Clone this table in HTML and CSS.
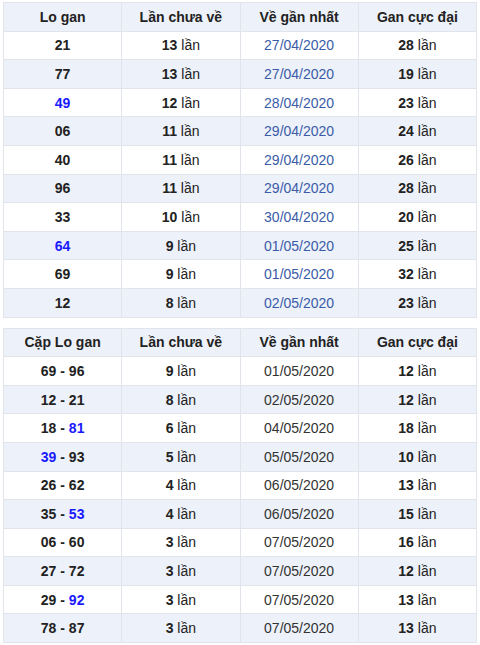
FILE: index.html
```html
<!DOCTYPE html>
<html>
<head>
<meta charset="utf-8">
<link rel="stylesheet" href="styles.css">
</head>
<body>
<table class="tbl">
  <thead>
    <tr><th>Lo gan</th><th>Lần chưa về</th><th>Về gần nhất</th><th>Gan cực đại</th></tr>
  </thead>
  <tbody>
    <tr><td class="num">21</td><td><b>13</b> lần</td><td class="date blue">27/04/2020</td><td><b>28</b> lần</td></tr>
    <tr><td class="num">77</td><td><b>13</b> lần</td><td class="date blue">27/04/2020</td><td><b>19</b> lần</td></tr>
    <tr><td class="num"><span class="hl">49</span></td><td><b>12</b> lần</td><td class="date blue">28/04/2020</td><td><b>23</b> lần</td></tr>
    <tr><td class="num">06</td><td><b>11</b> lần</td><td class="date blue">29/04/2020</td><td><b>24</b> lần</td></tr>
    <tr><td class="num">40</td><td><b>11</b> lần</td><td class="date blue">29/04/2020</td><td><b>26</b> lần</td></tr>
    <tr><td class="num">96</td><td><b>11</b> lần</td><td class="date blue">29/04/2020</td><td><b>28</b> lần</td></tr>
    <tr><td class="num">33</td><td><b>10</b> lần</td><td class="date blue">30/04/2020</td><td><b>20</b> lần</td></tr>
    <tr><td class="num"><span class="hl">64</span></td><td><b>9</b> lần</td><td class="date blue">01/05/2020</td><td><b>25</b> lần</td></tr>
    <tr><td class="num">69</td><td><b>9</b> lần</td><td class="date blue">01/05/2020</td><td><b>32</b> lần</td></tr>
    <tr><td class="num">12</td><td><b>8</b> lần</td><td class="date blue">02/05/2020</td><td><b>23</b> lần</td></tr>
  </tbody>
</table>
<table class="tbl second">
  <thead>
    <tr><th>Cặp Lo gan</th><th>Lần chưa về</th><th>Về gần nhất</th><th>Gan cực đại</th></tr>
  </thead>
  <tbody>
    <tr><td class="num">69 - 96</td><td><b>9</b> lần</td><td class="date">01/05/2020</td><td><b>12</b> lần</td></tr>
    <tr><td class="num">12 - 21</td><td><b>8</b> lần</td><td class="date">02/05/2020</td><td><b>12</b> lần</td></tr>
    <tr><td class="num">18 - <span class="hl">81</span></td><td><b>6</b> lần</td><td class="date">04/05/2020</td><td><b>18</b> lần</td></tr>
    <tr><td class="num"><span class="hl">39</span> - 93</td><td><b>5</b> lần</td><td class="date">05/05/2020</td><td><b>10</b> lần</td></tr>
    <tr><td class="num">26 - 62</td><td><b>4</b> lần</td><td class="date">06/05/2020</td><td><b>13</b> lần</td></tr>
    <tr><td class="num">35 - <span class="hl">53</span></td><td><b>4</b> lần</td><td class="date">06/05/2020</td><td><b>15</b> lần</td></tr>
    <tr><td class="num">06 - 60</td><td><b>3</b> lần</td><td class="date">07/05/2020</td><td><b>16</b> lần</td></tr>
    <tr><td class="num">27 - 72</td><td><b>3</b> lần</td><td class="date">07/05/2020</td><td><b>12</b> lần</td></tr>
    <tr><td class="num">29 - <span class="hl">92</span></td><td><b>3</b> lần</td><td class="date">07/05/2020</td><td><b>13</b> lần</td></tr>
    <tr><td class="num">78 - 87</td><td><b>3</b> lần</td><td class="date">07/05/2020</td><td><b>13</b> lần</td></tr>
  </tbody>
</table>
</body>
</html>
```
FILE: styles.css
```css
html, body {
  background: #ffffff;
}
body {
  margin: 2px 3px 0 3px;
  font-family: "Liberation Sans", Arial, sans-serif;
  font-size: 14px;
  color: #222;
}
.tbl {
  width: 474px;
  border-collapse: collapse;
  table-layout: fixed;
}
.second {
  margin-top: 10px;
}
.tbl th,
.tbl td {
  border: 1px solid #e1e4ea;
  text-align: center;
  padding: 0;
  height: 27.6px;
  line-height: 16px;
}
.tbl th {
  background: #edf1f9;
  font-weight: bold;
  color: #222;
}
.tbl tbody tr:nth-child(even) td {
  background: #edf1f9;
}
.tbl td b,
.num {
  font-weight: bold;
  color: #222;
}
.date {
  color: #333;
}
.date.blue {
  color: #3a5ba8;
}
.hl {
  color: #1a1aff;
}
```
